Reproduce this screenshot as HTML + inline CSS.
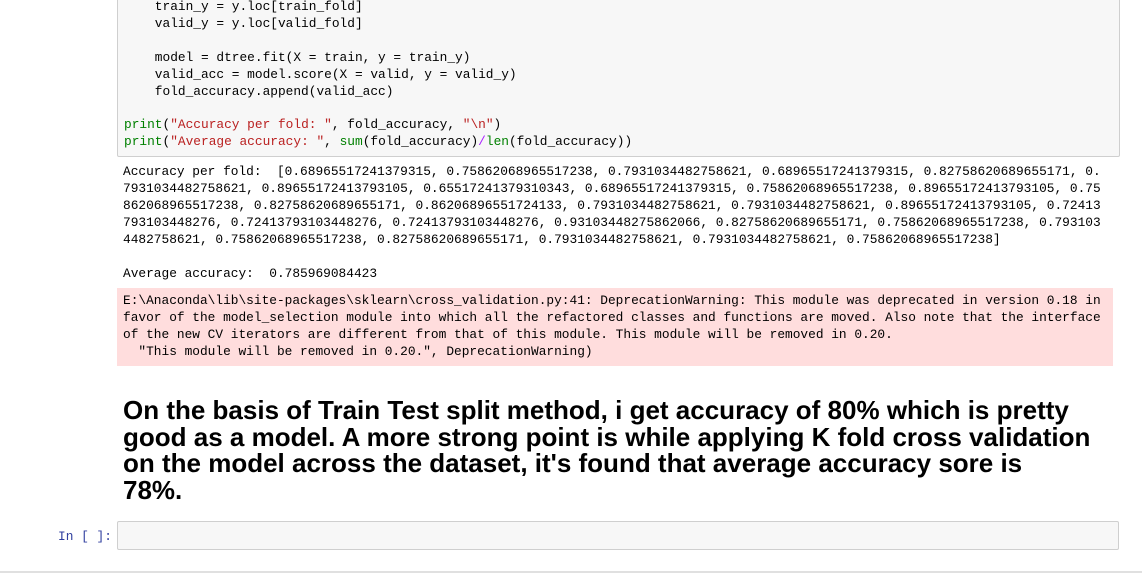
<!DOCTYPE html>
<html><head><meta charset="utf-8"><style>
body{margin:0;width:1142px;height:573px;background:#fff;position:relative;overflow:hidden;font-family:"Liberation Mono",monospace;}
pre{margin:0;font-family:"Liberation Mono",monospace;font-size:12.84px;white-space:pre;}
.code{position:absolute;left:117px;top:-2px;width:1001px;height:157px;background:#f7f7f7;border:1px solid #cfcfcf;border-radius:2px;}
.code pre{position:absolute;left:6px;top:0;line-height:16.9px;color:#000;}
.s{color:#BA2121}.g{color:#008000}.p{color:#AA22FF}
.out{position:absolute;left:123px;top:163px;line-height:17px;color:#000;}
.err{position:absolute;left:117px;top:288px;width:996px;height:78px;background:#fdd;}
.err pre{position:absolute;left:6px;top:4px;line-height:17px;}
h1{position:absolute;left:123px;top:397px;margin:0;font-family:"Liberation Sans",sans-serif;font-weight:bold;font-size:26px;line-height:26.5px;width:1010px;color:#000;white-space:nowrap;}
.inp{position:absolute;left:117px;top:521px;width:1000px;height:27px;background:#f7f7f7;border:1px solid #cfcfcf;border-radius:2px;}
.prompt{position:absolute;left:58px;top:528px;color:#303F9F;line-height:17px;}
.bot{position:absolute;left:0;top:571px;width:1142px;height:2px;background:#e0e0e0;}
</style></head><body>
<div class="code"><pre>    train_y = y.loc[train_fold]
    valid_y = y.loc[valid_fold]

    model = dtree.fit(X = train, y = train_y)
    valid_acc = model.score(X = valid, y = valid_y)
    fold_accuracy.append(valid_acc)

<span class="g">print</span>(<span class="s">"Accuracy per fold: "</span>, fold_accuracy, <span class="s">"\n"</span>)
<span class="g">print</span>(<span class="s">"Average accuracy: "</span>, <span class="g">sum</span>(fold_accuracy)<span class="p">/</span><span class="g">len</span>(fold_accuracy))</pre></div>
<pre class="out">Accuracy per fold:  [0.68965517241379315, 0.75862068965517238, 0.7931034482758621, 0.68965517241379315, 0.82758620689655171, 0.
7931034482758621, 0.89655172413793105, 0.65517241379310343, 0.68965517241379315, 0.75862068965517238, 0.89655172413793105, 0.75
862068965517238, 0.82758620689655171, 0.86206896551724133, 0.7931034482758621, 0.7931034482758621, 0.89655172413793105, 0.72413
793103448276, 0.72413793103448276, 0.72413793103448276, 0.93103448275862066, 0.82758620689655171, 0.75862068965517238, 0.793103
4482758621, 0.75862068965517238, 0.82758620689655171, 0.7931034482758621, 0.7931034482758621, 0.75862068965517238]

Average accuracy:  0.785969084423</pre>
<div class="err"><pre>E:\Anaconda\lib\site-packages\sklearn\cross_validation.py:41: DeprecationWarning: This module was deprecated in version 0.18 in
favor of the model_selection module into which all the refactored classes and functions are moved. Also note that the interface
of the new CV iterators are different from that of this module. This module will be removed in 0.20.
  "This module will be removed in 0.20.", DeprecationWarning)</pre></div>
<h1>On the basis of Train Test split method, i get accuracy of 80% which is pretty<br>good as a model. A more strong point is while applying K fold cross validation<br>on the model across the dataset, it's found that average accuracy sore is<br>78%.</h1>
<pre class="prompt">In [ ]:</pre>
<div class="inp"></div>
<div class="bot"></div>
</body></html>
